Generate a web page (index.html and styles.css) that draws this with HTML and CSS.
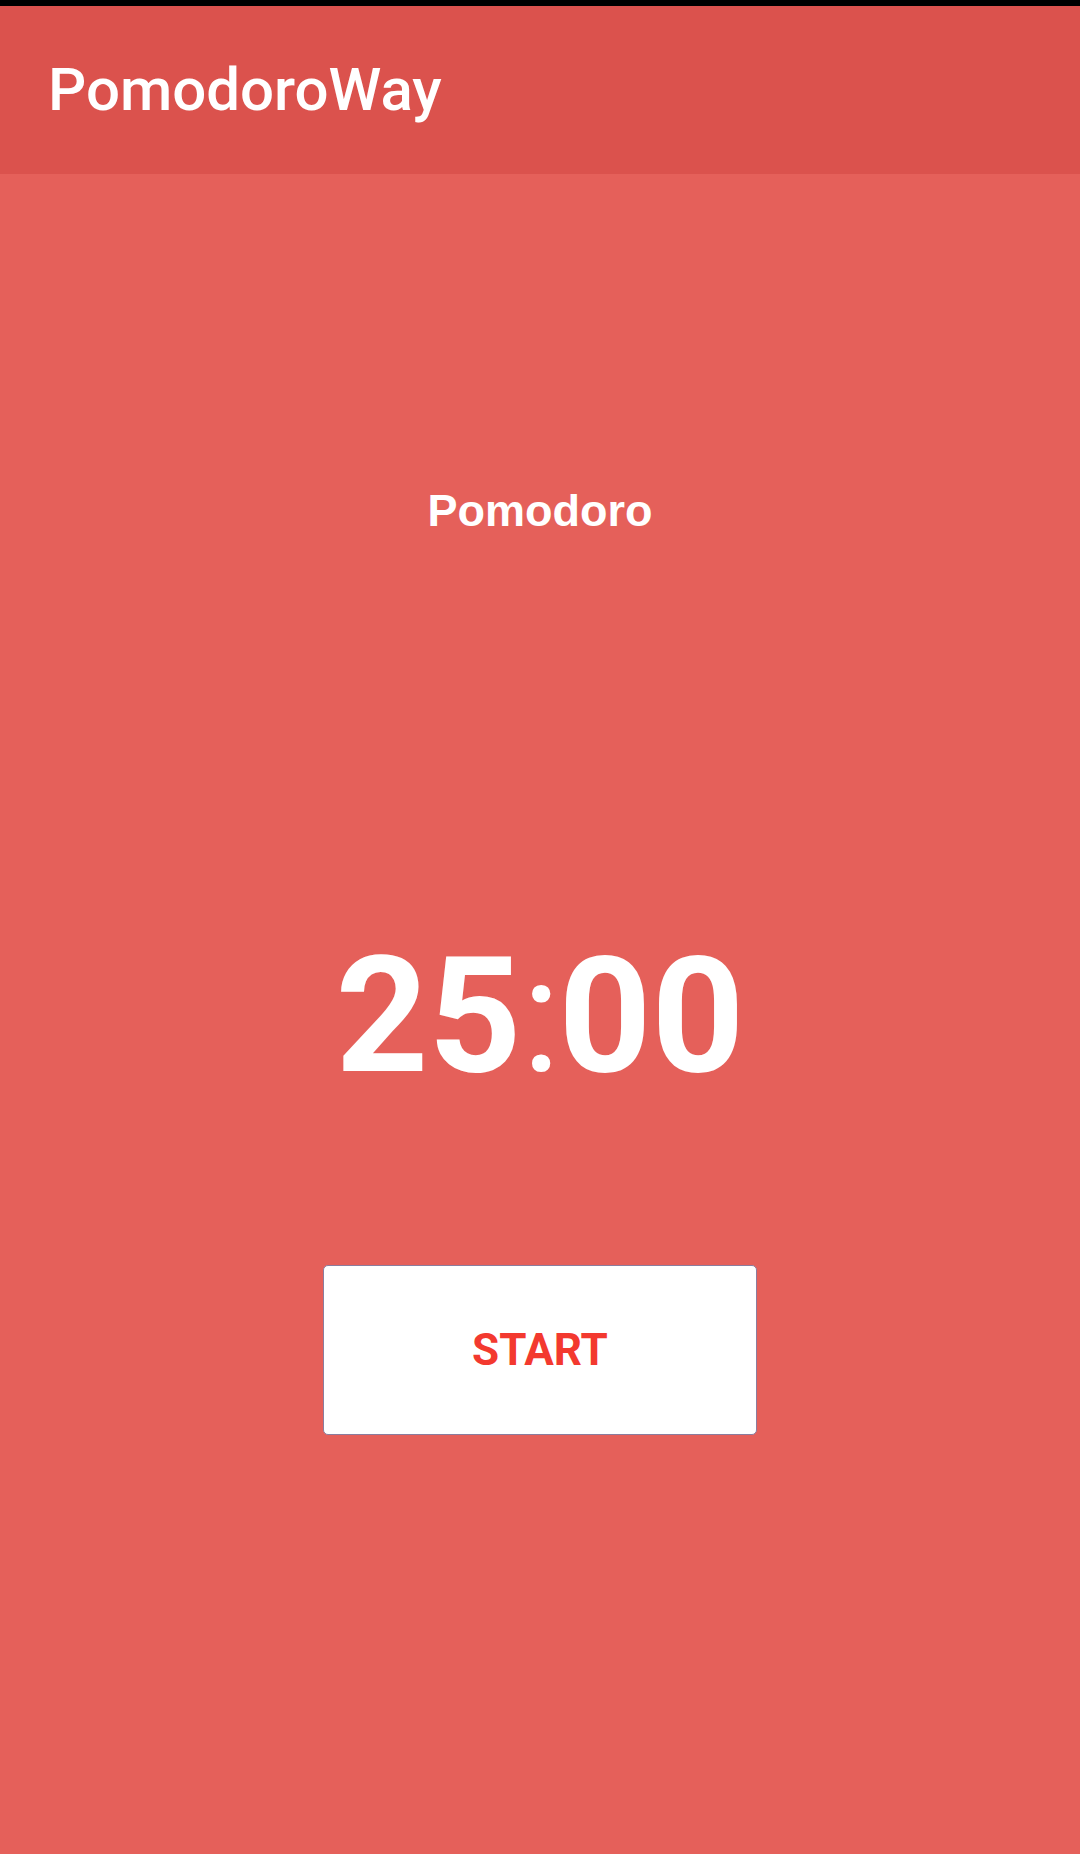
FILE: index.html
```html
<!DOCTYPE html>
<html>
<head>
<meta charset="utf-8">
<link rel="stylesheet" href="styles.css">
</head>
<body>
<div class="status"></div>
<header class="appbar"><h1 class="title">PomodoroWay</h1></header>
<main class="content">
  <div class="mode">Pomodoro</div>
  <div class="timer">25<span class="colon">:</span>00</div>
  <button class="start">START</button>
</main>
</body>
</html>
```
FILE: styles.css
```css
html, body {
  margin: 0;
  padding: 0;
}
body {
  width: 1080px;
  height: 1854px;
  background: #E5605A;
  font-family: Roboto, "Noto Sans", sans-serif;
  display: flex;
  flex-direction: column;
  overflow: hidden;
}
.status {
  height: 6px;
  background: #000;
  flex: none;
}
.appbar {
  height: 168px;
  flex: none;
  background: #DB524D;
  display: flex;
  align-items: center;
  padding-left: 48px;
}
.title {
  margin: 0;
  color: #fff;
  font-size: 60px;
  font-weight: 500;
  line-height: 1;
}
.content {
  flex: 1;
  display: flex;
  flex-direction: column;
  align-items: center;
}
.mode {
  margin-top: 314px;
  color: #fff;
  font-family: "Liberation Sans", Arial, sans-serif;
  font-size: 45px;
  font-weight: 700;
  line-height: 1;
}
.timer {
  margin-top: 402px;
  color: #fff;
  font-size: 162px;
  font-weight: 700;
  line-height: 1;
}
.colon {
  font-weight: 400;
  margin-right: -2px;
}
.start {
  margin-top: 168px;
  width: 434px;
  height: 170px;
  box-sizing: border-box;
  background: #fff;
  border: 1px solid #8B7D9E;
  border-radius: 5px;
  color: #F3392F;
  font-family: Roboto, sans-serif;
  font-size: 44px;
  font-weight: 700;
  letter-spacing: 0;
  display: flex;
  align-items: center;
  justify-content: center;
  padding: 0;
}
```
